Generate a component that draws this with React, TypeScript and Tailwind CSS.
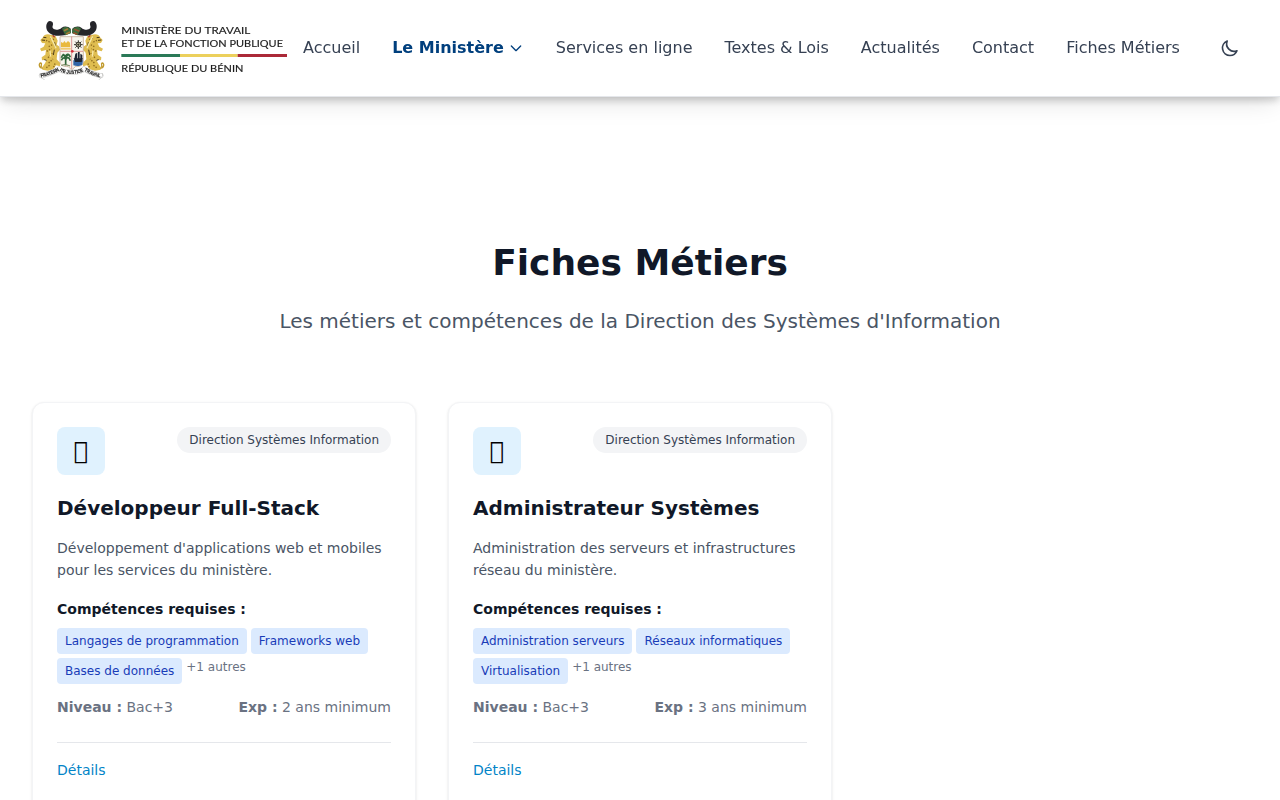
import { HiOutlineChevronDown, HiOutlineMoon } from "react-icons/hi";

type Job = {
  title: string;
  description: string;
  skills: string[];
  level: string;
  experience: string;
};

const jobs: Job[] = [
  {
    title: "Développeur Full-Stack",
    description: "Développement d'applications web et mobiles pour les services du ministère.",
    skills: ["Langages de programmation", "Frameworks web", "Bases de données"],
    level: "Bac+3",
    experience: "2 ans minimum",
  },
  {
    title: "Administrateur Systèmes",
    description: "Administration des serveurs et infrastructures réseau du ministère.",
    skills: ["Administration serveurs", "Réseaux informatiques", "Virtualisation"],
    level: "Bac+3",
    experience: "3 ans minimum",
  },
];

const links = ["Services en ligne", "Textes & Lois", "Actualités", "Contact", "Fiches Métiers"];

function Leopard() {
  return (
    <g>
      <path
        d="M62 74 C52 70 41 74 39 82 L31 90 L36 99 L46 100 L41 110 L30 116 L34 124 L48 120 L46 134 L35 142 L36 151 L50 149 L45 160 L37 171 L37 179 L54 182 L70 178 L78 166 L90 169 L90 158 L80 148 L82 128 L90 119 L87 109 L80 104 L83 92 L77 79 Z"
        fill="#dfbd50"
      />
      <path d="M39 174 C26 176 25 158 33 159 C38 162 30 168 35 172" fill="none" stroke="#c19b2f" strokeWidth="4" />
      <path
        d="M61 84 L73 89 M48 91 L63 98 M56 110 L67 104 M50 124 L65 116 M54 143 L67 130 M56 159 L69 147 M49 173 L60 165 M71 172 L76 158"
        stroke="#8d6a1d"
        strokeWidth="4"
        strokeDasharray="4 4"
      />
      <path d="M40 82 L49 83 M35 90 L45 91 M74 97 L76 110 M73 119 L70 135 M43 149 L50 151" stroke="#4b3917" strokeWidth="3" />
      <path d="M61 79 L72 101 L78 115 M60 122 L62 140" fill="none" stroke="#f8e9a8" strokeWidth="4" />
      <path d="M68 76 L74 82" stroke="#b33a2d" strokeWidth="4" />
    </g>
  );
}

function Horn() {
  return (
    <g>
      <path
        d="M54 35 C46 43 47 60 58 69 C70 79 88 79 108 75 L122 68 L122 56 C114 48 102 48 95 53 C87 60 75 62 69 55 C65 50 70 46 69 41 C69 34 59 31 54 35Z"
        fill="#25252a"
      />
      <path d="M96 57 C101 49 115 49 122 58 L123 70 L106 76 Z" fill="#3c6b3c" />
    </g>
  );
}

function Logo() {
  return (
    <svg
      className="h-16 w-[255px] shrink-0"
      viewBox="6 18 765 192"
      role="img"
      aria-label="Ministère du Travail et de la Fonction Publique"
    >
      <Leopard />
      <g transform="translate(249 0) scale(-1 1)">
        <Leopard />
      </g>
      <path d="M90 80 H160 V157 C159 168 145 170 136 170 L125 180 L115 170 C101 170 91 167 90 157Z" fill="#f8f5ed" stroke="#b99c80" strokeWidth="2" />
      <Horn />
      <g transform="translate(249 0) scale(-1 1)">
        <Horn />
      </g>
      <path d="M102 62 L114 56 M108 72 L120 66" stroke="#a67b36" strokeWidth="5" />
      <path d="M133 58 L148 64 M130 68 L142 73" stroke="#97502d" strokeWidth="5" />
      <path d="M125 80 V177 M91 124 H159" stroke="#cf6a6c" strokeWidth="2" />
      <path d="M93 96 L99 99 L103 93 L108 99 L114 93 L120 98 L121 112 H93Z" fill="#e9b93e" />
      <path d="M92 114 H122 V119 H92Z" fill="#f0ca70" />
      <g stroke="#302e27" strokeWidth="3">
        <path d="M145 91 V117 M132 104 H158 M136 95 L154 113 M154 95 L136 113" />
        <circle cx="145" cy="104" r="7" fill="#cac6a5" />
        <circle cx="145" cy="104" r="2" fill="#302e27" />
      </g>
      <path
        d="M107 137 V166 M94 143 C98 132 104 132 107 141 C110 129 118 132 121 142 M94 151 C100 139 106 144 107 149 C111 139 118 142 121 152 M98 132 L107 142 L116 131"
        fill="none"
        stroke="#2f683a"
        strokeWidth="5"
      />
      <path d="M94 166 C105 162 113 165 120 168" stroke="#667b4f" strokeWidth="3" fill="none" />
      <path d="M130 151 H159 L157 164 C149 169 139 169 130 166Z" fill="#3264a6" />
      <path d="M131 145 H159 L155 156 H135Z M136 131 L142 128 V147 H133Z M144 126 H149 V147 H144Z M151 131 L157 135 V147 H151Z" fill="#1d2433" />
      <circle cx="127" cy="124" r="4" fill="#d22f3a" />
      <g fill="none" strokeLinecap="round">
        <path d="M34 197 C52 194 70 186 88 177 C101 190 150 190 162 177 C178 186 192 194 213 197" stroke="#c9c9c7" strokeWidth="15" />
        <path d="M34 197 C52 194 70 186 88 177 C101 190 150 190 162 177 C178 186 192 194 213 197" stroke="#ffffff" strokeWidth="12" />
        <path d="M31 190 C27 198 34 204 43 209 M217 190 C221 198 214 204 207 209" stroke="#bdbdba" strokeWidth="2" />
      </g>
      <path id="motto" d="M33 202 C52 199 70 191 88 182 C101 195 150 195 162 182 C178 191 192 199 214 203" fill="none" />
      <text fontFamily="Liberation Sans, sans-serif" fontWeight="700" fontSize="14.5" fill="#1f1f1f" stroke="#1f1f1f" strokeWidth="0.6">
        <textPath href="#motto" textLength="190" lengthAdjust="spacingAndGlyphs">FRATERNITE JUSTICE TRAVAIL</textPath>
      </text>
      <g fontFamily="Lato, sans-serif" fontSize="30.5" fill="#1c1c1c" stroke="#1c1c1c" strokeWidth="0.5">
        <text x="274" y="72" textLength="387" lengthAdjust="spacingAndGlyphs">MINISTÈRE DU TRAVAIL</text>
        <text x="274" y="110" textLength="485" lengthAdjust="spacingAndGlyphs">ET DE LA FONCTION PUBLIQUE</text>
        <text x="274" y="186" textLength="366" lengthAdjust="spacingAndGlyphs">RÉPUBLIQUE DU BÉNIN</text>
      </g>
      <path d="M274 132H450V141H274Z" fill="#2a7957" />
      <path d="M450 132H623V141H450Z" fill="#ecd05c" />
      <path d="M623 132H771V141H623Z" fill="#ab2938" />
    </svg>
  );
}

function Header() {
  return (
    <header className="sticky top-0 z-10 h-[97px] border-b border-gray-200 bg-white/95 shadow-[0_4px_8px_-1px_rgba(0,0,0,0.2),0_8px_24px_-4px_rgba(0,0,0,0.13)] backdrop-blur-sm">
      <div className="flex h-full items-center px-8">
        <Logo />
        <nav className="ml-4 flex items-center gap-8 whitespace-nowrap text-base text-gray-700">
          <a>Accueil</a>
          <a className="flex items-center gap-1 font-bold text-[#003f7d]">
            Le Ministère
            <HiOutlineChevronDown className="size-4" />
          </a>
          {links.map((label) => (
            <a key={label}>{label}</a>
          ))}
        </nav>
        <button className="ml-auto p-2 text-gray-700" aria-label="Mode sombre">
          <HiOutlineMoon className="size-5" />
        </button>
      </div>
    </header>
  );
}

function JobCard({ job }: { job: Job }) {
  return (
    <article className="rounded-xl border border-gray-100 bg-white p-6 shadow-sm">
      <div className="mb-4 flex items-start justify-between">
        <div className="flex size-12 items-center justify-center rounded-lg bg-[#e0f2fe] text-2xl text-black">{"\uE000"}</div>
        <span className="rounded-full bg-gray-100 px-3 py-1 text-xs leading-[18px] text-gray-700">
          Direction Systèmes Information
        </span>
      </div>
      <h2 className="mb-3 text-xl leading-[34px] font-bold text-gray-900">{job.title}</h2>
      <p className="mb-4 text-sm leading-[22px] text-gray-600">{job.description}</p>
      <h3 className="mb-[7px] text-sm leading-6 font-bold text-gray-900">Compétences requises :</h3>
      <div className="mb-3 flex flex-wrap gap-1 text-xs leading-[18px]">
        {job.skills.map((skill) => (
          <span key={skill} className="rounded bg-blue-100 px-2 py-1 text-blue-800">
            {skill}
          </span>
        ))}
        <span className="text-gray-500">+1 autres</span>
      </div>
      <div className="mb-6 flex justify-between text-sm leading-[22px] text-gray-500">
        <span>
          <b>Niveau :</b> {job.level}
        </span>
        <span>
          <b>Exp :</b> {job.experience}
        </span>
      </div>
      <div className="border-t border-gray-200 pt-4 pb-4 text-sm leading-[22px] text-[#0284c7]">
        <a>Détails</a>
      </div>
    </article>
  );
}

export default function App() {
  return (
    <div className="h-screen overflow-hidden bg-white font-['DejaVu_Sans',sans-serif]">
      <Header />
      <main className="px-8 pt-[141px]">
        <div className="mb-16 text-center">
          <h1 className="mb-4 text-4xl leading-[50px] font-bold text-gray-900">Fiches Métiers</h1>
          <p className="text-xl leading-[34px] text-gray-600">
            Les métiers et compétences de la Direction des Systèmes d'Information
          </p>
        </div>
        <div className="grid grid-cols-3 gap-8">
          {jobs.map((job) => (
            <JobCard key={job.title} job={job} />
          ))}
        </div>
      </main>
    </div>
  );
}
